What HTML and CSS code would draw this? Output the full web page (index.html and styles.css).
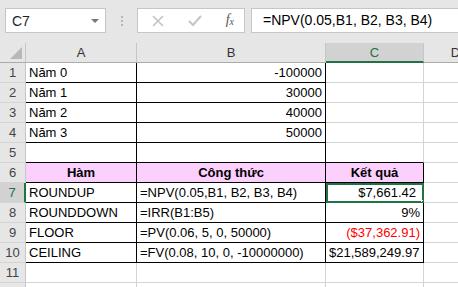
FILE: index.html
```html
<!DOCTYPE html>
<html lang="vi">

<head>
  <meta charset="UTF-8">
  <meta name="viewport" content="width=device-width, initial-scale=1.0">
  <title>Excel</title>
  <link rel="stylesheet" href="styles.css">
</head>

<body>
  <div class="bar">
    <div class="namebox">
      <span>C7</span>
      <span class="arrow"></span>
    </div>
    <div class="dots"><i></i><i></i><i></i></div>
    <div class="tools">
      <svg width="14" height="14" viewBox="0 0 14 14"><path d="M2 2 L12 12 M12 2 L2 12" stroke="#c4c4c4" stroke-width="1.6" fill="none"/></svg>
      <svg width="14" height="14" viewBox="0 0 14 14"><path d="M1 7 L5 11 L13 2" stroke="#c4c4c4" stroke-width="2" fill="none"/></svg>
      <span class="fx">f<sub>x</sub></span>
    </div>
    <div class="formula">=NPV(0.05,B1, B2, B3, B4)</div>
  </div>

  <table class="sheet">
    <colgroup>
      <col class="c-head">
      <col class="c-a">
      <col class="c-b">
      <col class="c-c">
      <col class="c-d">
    </colgroup>
    <tr class="cols">
      <th class="corner"><span class="tri"></span></th>
      <th>A</th>
      <th>B</th>
      <th class="sel">C</th>
      <th>D</th>
    </tr>
    <tr>
      <th>1</th>
      <td class="bb br">Năm 0</td>
      <td class="num bb br">-100000</td>
      <td></td>
      <td></td>
    </tr>
    <tr>
      <th>2</th>
      <td class="bb br">Năm 1</td>
      <td class="num bb br">30000</td>
      <td></td>
      <td></td>
    </tr>
    <tr>
      <th>3</th>
      <td class="bb br">Năm 2</td>
      <td class="num bb br">40000</td>
      <td></td>
      <td></td>
    </tr>
    <tr>
      <th>4</th>
      <td class="bb br">Năm 3</td>
      <td class="num bb br">50000</td>
      <td></td>
      <td></td>
    </tr>
    <tr>
      <th>5</th>
      <td class="bb br"></td>
      <td class="bb br"></td>
      <td class="bb"></td>
      <td></td>
    </tr>
    <tr class="head">
      <th>6</th>
      <td class="bb br">Hàm</td>
      <td class="bb br">Công thức</td>
      <td class="bb br">Kết quả</td>
      <td></td>
    </tr>
    <tr>
      <th class="sel">7</th>
      <td class="bb br">ROUNDUP</td>
      <td class="bb br">=NPV(0.05,B1, B2, B3, B4)</td>
      <td class="num bb br active"><span class="cur">$7,661.42</span><span class="handle"></span></td>
      <td></td>
    </tr>
    <tr>
      <th>8</th>
      <td class="bb br">ROUNDDOWN</td>
      <td class="bb br">=IRR(B1:B5)</td>
      <td class="num bb br">9%</td>
      <td></td>
    </tr>
    <tr>
      <th>9</th>
      <td class="bb br">FLOOR</td>
      <td class="bb br">=PV(0.06, 5, 0, 50000)</td>
      <td class="num bb br neg">($37,362.91)</td>
      <td></td>
    </tr>
    <tr>
      <th>10</th>
      <td class="bb br">CEILING</td>
      <td class="bb br">=FV(0.08, 10, 0, -10000000)</td>
      <td class="num bb br"><span class="cur">$21,589,249.97</span></td>
      <td></td>
    </tr>
    <tr>
      <th>11</th>
      <td></td>
      <td></td>
      <td></td>
      <td></td>
    </tr>
    <tr>
      <th></th>
      <td></td>
      <td></td>
      <td></td>
      <td></td>
    </tr>
  </table>
</body>

</html>
```

FILE: styles.css
```css
* {
  margin: 0;
  padding: 0;
  box-sizing: border-box;
}

body {
  width: 458px;
  height: 287px;
  overflow: hidden;
  background: #fff;
  font-family: "Liberation Sans", Arial, sans-serif;
  font-size: 13px;
  color: #000;
}

/* thanh công thức */
.bar {
  height: 43px;
  background: #e6e6e6;
  display: flex;
  align-items: flex-start;
  padding-top: 8px;
  padding-left: 5px;
}

.namebox {
  width: 101px;
  height: 25px;
  background: #fff;
  border: 1px solid #c6c6c6;
  display: flex;
  align-items: center;
  justify-content: space-between;
  padding: 0 6px 0 6px;
  font-size: 14px;
  color: #1f1f1f;
}

.arrow {
  width: 0;
  height: 0;
  border-left: 4px solid transparent;
  border-right: 4px solid transparent;
  border-top: 4px solid #777;
}

.dots {
  width: 31px;
  height: 25px;
  display: flex;
  flex-direction: column;
  align-items: center;
  justify-content: center;
  gap: 2px;
}

.dots i {
  width: 2px;
  height: 2px;
  background: #b4b4b4;
}

.tools {
  width: 108px;
  height: 25px;
  background: #fff;
  border: 1px solid #c6c6c6;
  display: flex;
  align-items: center;
  justify-content: space-between;
  padding: 0 10px 0 13px;
}

.fx {
  font-family: "Liberation Serif", serif;
  font-style: italic;
  font-size: 14px;
  color: #555;
  padding-bottom: 2px;
}

.fx sub {
  font-size: 10px;
  vertical-align: baseline;
  position: relative;
  top: 1px;
}

.formula {
  flex: 1;
  height: 25px;
  margin-left: 6px;
  background: #fff;
  border: 1px solid #c6c6c6;
  border-right: none;
  padding-left: 11px;
  line-height: 23px;
  font-size: 14px;
  white-space: nowrap;
}

/* bảng tính */
.sheet {
  border-collapse: separate;
  border-spacing: 0;
  table-layout: fixed;
  width: 488px;
}

.c-head { width: 26px; }
.c-a { width: 111px; }
.c-b { width: 189px; }
.c-c { width: 98px; }
.c-d { width: 64px; }

.sheet tr {
  height: 20px;
}

.sheet th {
  background: #e6e6e6;
  font-weight: normal;
  color: #444;
  font-size: 13px;
  border-right: 1px solid #c6c6c6;
  border-bottom: 1px solid #d4d4d4;
  text-align: center;
  padding: 0;
  height: 20px;
}

.cols th {
  border-right: 1px solid #c6c6c6;
  border-bottom: 1px solid #ababab;
  color: #333;
}

.cols th.sel,
th.sel {
  background: #d2d2d2;
  color: #217346;
}

.cols th.sel {
  border-bottom: 2px solid #217346;
}

tr th.sel:first-child {
  border-right: 2px solid #217346;
  color: #217346;
}

.corner {
  position: relative;
}

.tri {
  position: absolute;
  right: 3px;
  bottom: 3px;
  width: 0;
  height: 0;
  border-left: 12px solid transparent;
  border-bottom: 12px solid #b8b8b8;
}

.sheet td {
  border-right: 1px solid #d4d4d4;
  border-bottom: 1px solid #d4d4d4;
  padding: 0 3px;
  white-space: nowrap;
  overflow: hidden;
  height: 20px;
  line-height: 19px;
}

.sheet td.bb {
  border-bottom-color: #000;
}

.sheet td.br {
  border-right-color: #000;
}

.num {
  text-align: right;
}

.cur {
  padding-right: 4px;
}

.neg {
  color: #ff0000;
}

.head td {
  background: #fcd0fc;
  font-weight: bold;
  text-align: center;
}

.head td:last-child {
  background: #fff;
}

.active {
  position: relative;
  outline: 2px solid #217346;
  outline-offset: -2px;
}

.handle {
  position: absolute;
  right: -4px;
  bottom: -4px;
  width: 6px;
  height: 6px;
  background: #217346;
  border: 1px solid #fff;
}
```
